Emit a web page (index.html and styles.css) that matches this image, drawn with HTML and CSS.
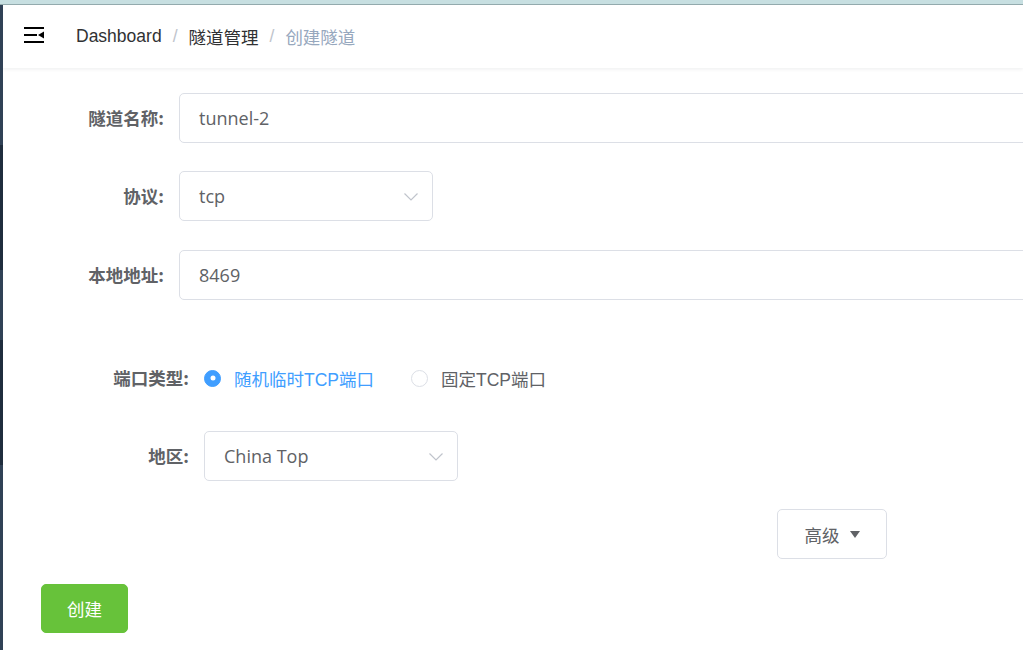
FILE: index.html
```html
<!DOCTYPE html>
<html lang="zh-CN">
<head>
<meta charset="utf-8">
<title>创建隧道</title>
<link rel="stylesheet" href="styles.css">
</head>
<body>
<div class="topbar"></div>
<div class="layout">
  <div class="sidebar">
    <div class="seg seg-a s1"></div>
    <div class="seg seg-b s2"></div>
    <div class="seg seg-a s3"></div>
    <div class="seg seg-b s4"></div>
    <div class="seg seg-a s5"></div>
  </div>
  <div class="main">
    <div class="navbar">
      <svg class="hamburger" width="20" height="16" viewBox="0 0 20 16">
        <rect x="0" y="0" width="20" height="2" fill="#000"/>
        <rect x="0" y="7" width="13" height="2" fill="#000"/>
        <polygon points="14,8 20,4.5 20,11.5" fill="#000"/>
        <rect x="0" y="14" width="20" height="2" fill="#000"/>
      </svg>
      <div class="breadcrumb">
        <span class="crumb">Dashboard</span>
        <span class="sep">/</span>
        <span class="crumb">隧道管理</span>
        <span class="sep">/</span>
        <span class="crumb current">创建隧道</span>
      </div>
    </div>
    <div class="content">
      <div class="form form-main">
        <div class="form-item">
          <label class="form-label">隧道名称:</label>
          <div class="input wide"><span class="value">tunnel-2</span></div>
        </div>
        <div class="form-item">
          <label class="form-label">协议:</label>
          <div class="input select"><span class="value">tcp</span>
            <svg class="chevron" width="14" height="8" viewBox="0 0 14 8"><polyline points="0.5,0.5 7,7 13.5,0.5" fill="none" stroke="#c0c4cc" stroke-width="1.2"/></svg>
          </div>
        </div>
        <div class="form-item">
          <label class="form-label">本地地址:</label>
          <div class="input wide"><span class="value">8469</span></div>
        </div>
      </div>
      <div class="form form-port">
        <div class="form-item">
          <label class="form-label">端口类型:</label>
          <div class="radio-group">
            <span class="radio checked"><span class="radio-inner"></span><span class="radio-label">随机临时TCP端口</span></span>
            <span class="radio"><span class="radio-inner"></span><span class="radio-label">固定TCP端口</span></span>
          </div>
        </div>
        <div class="form-item">
          <label class="form-label">地区:</label>
          <div class="input select"><span class="value">China Top</span>
            <svg class="chevron" width="14" height="8" viewBox="0 0 14 8"><polyline points="0.5,0.5 7,7 13.5,0.5" fill="none" stroke="#c0c4cc" stroke-width="1.2"/></svg>
          </div>
        </div>
      </div>
      <div class="advanced-row">
        <button class="btn btn-default">高级<span class="caret"></span></button>
      </div>
      <div class="submit-row">
        <button class="btn btn-success">创建</button>
      </div>
    </div>
  </div>
</div>
</body>
</html>
```
FILE: styles.css
```css
html, body {
  margin: 0;
  padding: 0;
}
body {
  width: 1023px;
  height: 650px;
  overflow: hidden;
  background: #fff;
  font-family: "Liberation Sans", "Noto Sans CJK SC", sans-serif;
  color: #303133;
}
.topbar {
  height: 4px;
  background: #c7dfe1;
  border-bottom: 1px solid #93aaad;
}
.layout {
  display: flex;
  height: 645px;
}
.sidebar {
  width: 3px;
  display: flex;
  flex-direction: column;
  flex-shrink: 0;
}
.seg-a { background: #304156; }
.seg-b { background: #1f2d3d; }
.s1 { height: 140px; }
.s2 { height: 125px; }
.s3 { height: 70px; }
.s4 { height: 125px; }
.s5 { flex: 1; }
.main {
  flex: 1;
  overflow: hidden;
  background: #fff;
}
.navbar {
  height: 63px;
  display: flex;
  align-items: center;
  padding-left: 21px;
  box-shadow: 0 1px 4px rgba(0, 21, 41, 0.08);
  position: relative;
}
.hamburger {
  margin-top: -3px;
  flex-shrink: 0;
}
.breadcrumb {
  margin-left: 32px;
  font-size: 17.5px;
  display: flex;
  align-items: center;
}
.crumb { color: #303133; }
.crumb.current { color: #97a8be; }
.sep {
  color: #c0c4cc;
  margin: 0 11px;
}
.content {
  padding: 25px 0 0 38px;
}
.form-item {
  display: flex;
  align-items: center;
  height: 50px;
  margin-bottom: 29px;
}
.form-main .form-item:first-child { margin-bottom: 28px; }
.form-label {
  box-sizing: border-box;
  text-align: right;
  padding-right: 15px;
  font-size: 17.5px;
  font-weight: 700;
  color: #606266;
  line-height: 50px;
  flex-shrink: 0;
  font-family: "Noto Sans CJK SC", sans-serif;
}
.form-main .form-label { width: 138px; }
.form-port .form-label { width: 163px; }
.form-port { margin-top: 53px; }
.form-port .form-item:first-child { margin-bottom: 28px; }
.form-port .form-item:last-child { margin-bottom: 28px; }
.input {
  box-sizing: border-box;
  height: 50px;
  border: 1px solid #dcdfe6;
  border-radius: 5px;
  display: flex;
  align-items: center;
  padding: 0 14px 0 19px;
  font-size: 18px;
  color: #606266;
  font-family: "Open Sans", "Noto Sans CJK SC", sans-serif;
  flex-shrink: 0;
}
.input.wide { width: 900px; }
.input.select {
  width: 254px;
  justify-content: space-between;
}
.value { line-height: 1; }
.chevron { flex-shrink: 0; margin-top: 1px; }
.radio-group {
  display: flex;
  align-items: center;
  height: 50px;
}
.radio {
  display: flex;
  align-items: center;
  margin-right: 37px;
  font-size: 17.5px;
  color: #606266;
  font-family: "Liberation Sans", "Noto Sans CJK SC", sans-serif;
}
.radio-inner {
  box-sizing: border-box;
  width: 17px;
  height: 17px;
  border-radius: 50%;
  border: 1px solid #dcdfe6;
  background: #fff;
  position: relative;
  flex-shrink: 0;
}
.radio.checked .radio-inner {
  background: #409eff;
  border-color: #409eff;
}
.radio.checked .radio-inner::after {
  content: "";
  position: absolute;
  width: 5px;
  height: 5px;
  border-radius: 50%;
  background: #fff;
  left: 50%;
  top: 50%;
  transform: translate(-50%, -50%);
}
.radio-label { padding-left: 13px; }
.radio.checked .radio-label { color: #409eff; }
.advanced-row {
  padding-left: 736px;
  height: 50px;
  margin-bottom: 25px;
}
.btn {
  box-sizing: border-box;
  height: 50px;
  border-radius: 5px;
  font-size: 17.5px;
  font-family: "Noto Sans CJK SC", sans-serif;
  cursor: pointer;
  display: inline-flex;
  align-items: center;
  justify-content: center;
  vertical-align: top;
}
.btn-default {
  width: 110px;
  background: #fff;
  border: 1px solid #dcdfe6;
  color: #606266;
  padding: 0;
}
.caret {
  display: inline-block;
  width: 0;
  height: 0;
  border-left: 5px solid transparent;
  border-right: 5px solid transparent;
  border-top: 7px solid #606266;
  margin-left: 10px;
}
.btn-success {
  width: 87px;
  height: 49px;
  background: #67c23a;
  border: 1px solid #67c23a;
  color: #fff;
  padding: 0;
}
```
